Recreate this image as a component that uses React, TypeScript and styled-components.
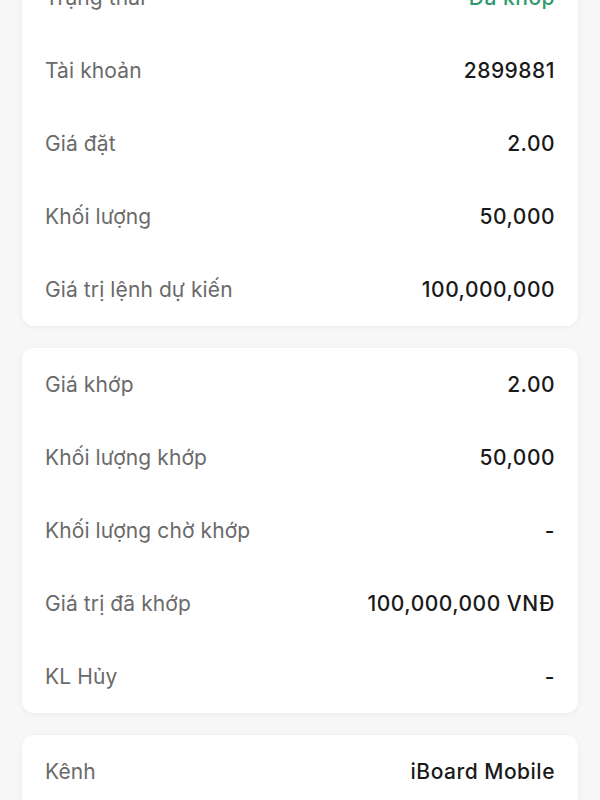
import styled, { createGlobalStyle } from "styled-components";

const GlobalStyle = createGlobalStyle`
	html, body {
		margin: 0;
		padding: 0;
		background: #f7f7f8;
		font-family: Inter, "Noto Sans", "Liberation Sans", sans-serif;
		-webkit-font-smoothing: antialiased;
	}
`;

const Page = styled.div`
	width: 600px;
	height: 800px;
	overflow: hidden;
	background: #f7f7f8;
	box-sizing: border-box;
	padding: 0 22px;
`;

const Stack = styled.div`
	display: flex;
	flex-direction: column;
	gap: 22px;
	margin-top: -39px;
`;

const Card = styled.section`
	background: #ffffff;
	border-radius: 12px;
	box-shadow: 0 1px 6px rgba(0, 0, 0, 0.05);
	display: flex;
	flex-direction: column;
`;

const Row = styled.div`
	height: 73px;
	display: flex;
	align-items: center;
	justify-content: space-between;
	padding: 0 23px;
`;

const Label = styled.span`
	font-size: 21px;
	color: #6a6a6a;
	font-weight: 400;
	letter-spacing: 0.1px;
`;

const Value = styled.span<{ $tone?: "green" }>`
	font-size: 21px;
	font-weight: 500;
	letter-spacing: 0.5px;
	color: ${(p) => (p.$tone === "green" ? "#2f9a6c" : "#1a1a1a")};
`;

type Item = { label: string; value: string; tone?: "green" };

const orderInfo: Item[] = [
	{ label: "Trạng thái", value: "Đã khớp", tone: "green" },
	{ label: "Tài khoản", value: "2899881" },
	{ label: "Giá đặt", value: "2.00" },
	{ label: "Khối lượng", value: "50,000" },
	{ label: "Giá trị lệnh dự kiến", value: "100,000,000" },
];

const matchInfo: Item[] = [
	{ label: "Giá khớp", value: "2.00" },
	{ label: "Khối lượng khớp", value: "50,000" },
	{ label: "Khối lượng chờ khớp", value: "-" },
	{ label: "Giá trị đã khớp", value: "100,000,000 VNĐ" },
	{ label: "KL Hủy", value: "-" },
];

const channelInfo: Item[] = [{ label: "Kênh", value: "iBoard Mobile" }];

const InfoCard = ({ items }: { items: Item[] }) => (
	<Card>
		{items.map((item) => (
			<Row key={item.label}>
				<Label>{item.label}</Label>
				<Value $tone={item.tone}>{item.value}</Value>
			</Row>
		))}
	</Card>
);

export default function App() {
	return (
		<>
			<GlobalStyle />
			<Page>
				<Stack>
					<InfoCard items={orderInfo} />
					<InfoCard items={matchInfo} />
					<InfoCard items={channelInfo} />
				</Stack>
			</Page>
		</>
	);
}
